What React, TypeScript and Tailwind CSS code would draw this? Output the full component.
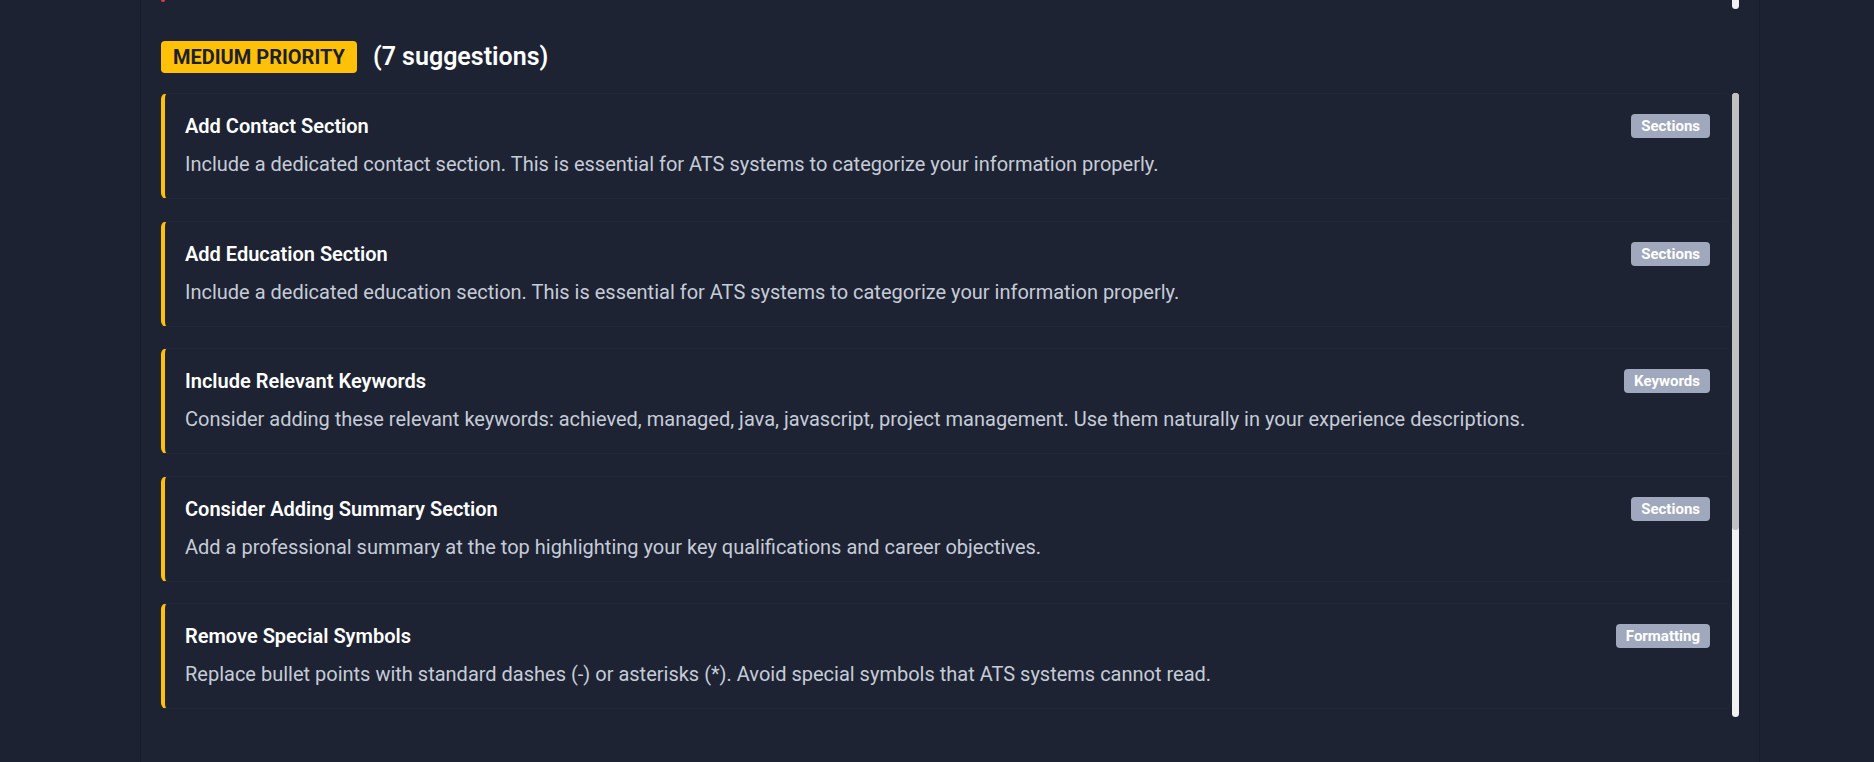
import React from 'react';

type Suggestion = {
  title: string;
  text: string;
  tag: string;
};

const suggestions: Suggestion[] = [
  {
    title: 'Add Contact Section',
    text: 'Include a dedicated contact section. This is essential for ATS systems to categorize your information properly.',
    tag: 'Sections',
  },
  {
    title: 'Add Education Section',
    text: 'Include a dedicated education section. This is essential for ATS systems to categorize your information properly.',
    tag: 'Sections',
  },
  {
    title: 'Include Relevant Keywords',
    text: 'Consider adding these relevant keywords: achieved, managed, java, javascript, project management. Use them naturally in your experience descriptions.',
    tag: 'Keywords',
  },
  {
    title: 'Consider Adding Summary Section',
    text: 'Add a professional summary at the top highlighting your key qualifications and career objectives.',
    tag: 'Sections',
  },
  {
    title: 'Remove Special Symbols',
    text: 'Replace bullet points with standard dashes (-) or asterisks (*). Avoid special symbols that ATS systems cannot read.',
    tag: 'Formatting',
  },
  {
    title: 'Use Standard Date Formats',
    text: 'Write dates consistently, for example "Jan 2020 - Mar 2022", so ATS systems can parse your work history.',
    tag: 'Formatting',
  },
  {
    title: 'Quantify Your Achievements',
    text: 'Add numbers and measurable results to your experience bullet points to show real impact.',
    tag: 'Content',
  },
];

const SuggestionCard = ({ item }: { item: Suggestion }) => (
  <div className="shrink-0 rounded-md border border-[#222839] border-l-4 border-l-[#ffc107] px-5 pt-5 pb-[22px]">
    <div className="flex h-6 items-start justify-between gap-4">
      <h3 className="text-[20px] leading-6 font-semibold text-white">{item.title}</h3>
      <span className="h-6 rounded px-[10px] text-[15px] leading-6 font-bold text-white bg-[#a0a8bd]">
        {item.tag}
      </span>
    </div>
    <p className="mt-[14px] text-[20px] leading-6 text-[#c6ccd7]">{item.text}</p>
  </div>
);

export default function App() {
  return (
    <div className="h-[762px] overflow-hidden bg-[#1c2232] font-['Roboto','Liberation_Sans',sans-serif]">
      <div className="ml-[140px] h-full w-[1620px] border-x border-[#181d2a] bg-[#1d2333] px-5">
        {/* tail of the high priority list above */}
        <div className="flex h-[10px] gap-px">
          <div className="flex-1">
            <div className="h-[2px] w-1 rounded-b-sm bg-[#e53e3e]" />
          </div>
          <div className="h-[9px] w-[7px] rounded-b-full bg-[#f1f1f1]" />
        </div>

        <section className="mt-[31px]">
          <div className="flex h-8 items-center gap-4">
            <span className="h-8 rounded px-3 text-[20px] leading-8 font-bold uppercase text-[#1a202c] bg-[#ffc107]">
              Medium Priority
            </span>
            <h2 className="text-[25px] leading-8 font-semibold text-white">(7 suggestions)</h2>
          </div>

          <div className="mt-5 flex h-[624px] gap-px">
            <div className="flex flex-1 flex-col gap-[21.5px] overflow-y-auto pb-[22px] [scrollbar-width:none]">
              {suggestions.map((s) => (
                <SuggestionCard key={s.title} item={s} />
              ))}
            </div>
            {/* scrollbar */}
            <div className="flex w-[7px] flex-col rounded-full bg-[#f1f1f1]">
              <div className="h-[437px] rounded-full bg-[#c1c1c1]" />
            </div>
          </div>
        </section>
      </div>
    </div>
  );
}
